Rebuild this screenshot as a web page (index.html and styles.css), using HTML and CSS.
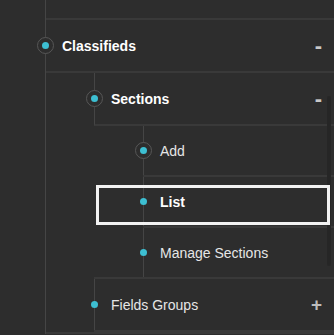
FILE: index.html
```html
<!DOCTYPE html>
<html lang="en">
<head>
  <meta charset="UTF-8" />
  <meta name="viewport" content="width=device-width, initial-scale=1" />
  <title>Menu tree</title>
  <link rel="stylesheet" href="styles.css">
</head>
<body>

<!-- Sidebar tree -->
<div class="tree">
  <ul class="branch root">
    <li class="node"><div class="stub"></div></li>
    <li class="node">
      <div class="row open">
        <span class="marker ring"><span class="dot"></span></span>
        <span class="label strong">Classifieds</span>
        <span class="toggle">-</span>
      </div>
      <ul class="branch sub">
        <li class="node">
          <div class="row open">
            <span class="marker ring"><span class="dot"></span></span>
            <span class="label strong">Sections</span>
            <span class="toggle">-</span>
          </div>
          <ul class="branch sub deep">
            <li class="node">
              <div class="row short">
                <span class="marker ring"><span class="dot"></span></span>
                <span class="label">Add</span>
              </div>
            </li>
            <li class="node">
              <div class="row short current">
                <span class="marker"><span class="dot"></span></span>
                <span class="label strong">List</span>
              </div>
            </li>
            <li class="node last">
              <div class="row short">
                <span class="marker"><span class="dot"></span></span>
                <span class="label">Manage Sections</span>
              </div>
            </li>
          </ul>
        </li>
        <li class="node">
          <div class="row">
            <span class="marker"><span class="dot"></span></span>
            <span class="label">Fields Groups</span>
            <span class="toggle plus">+</span>
          </div>
        </li>
      </ul>
    </li>
  </ul>
  <div class="scroll-thumb"></div>
</div>

</body>
</html>
```

FILE: styles.css
```css
    body {
      font-family: 'Liberation Sans', Arial, sans-serif;
      font-size: 14px;
      background-color: #2d2d2d;
      color: #e6e6e6;
      margin: 0;
      padding: 0;
      overflow: hidden;
    }

    .tree {
      position: relative;
    }

    .branch {
      list-style: none;
      margin: 0;
      padding: 0;
    }

    /* Tree lines */
    .root {
      margin-left: 45px;
      border-left: 1px solid #454545;
    }

    .sub {
      padding-left: 48px;
    }

    .sub.deep {
      padding-left: 49px;
    }

    .node {
      border-bottom: 2px solid #393939;
    }

    .node.last {
      border-bottom: none;
    }

    .stub {
      height: 18px;
    }

    .row {
      display: flex;
      align-items: center;
      height: 51px;
      padding-right: 12px;
    }

    .row.short {
      height: 49px;
    }

    .row.open {
      border-bottom: 2px solid #393939;
    }

    .sub .row {
      border-left: 1px solid #454545;
    }

    /* Bullets */
    .marker {
      box-sizing: border-box;
      width: 17px;
      height: 17px;
      margin-left: -9px;
      border: 1px solid transparent;
      border-radius: 50%;
      display: flex;
      align-items: center;
      justify-content: center;
      flex-shrink: 0;
    }

    .marker.ring {
      border-color: #575757;
      background-color: #2d2d2d;
    }

    .dot {
      width: 7px;
      height: 7px;
      border-radius: 50%;
      background-color: #3dbfd2;
    }

    .label {
      margin-left: 8px;
    }

    .label.strong {
      font-weight: bold;
      color: #fff;
    }

    .toggle {
      margin-left: auto;
      font-weight: bold;
      font-size: 22px;
      color: #c8c8c8;
    }

    .toggle.plus {
      font-size: 19px;
      color: #bdbdbd;
    }

    /* Selected item frame */
    .row.current {
      position: relative;
    }

    .row.current::before {
      content: "";
      position: absolute;
      z-index: 2;
      left: -48px;
      top: 8px;
      width: 234px;
      height: 40px;
      box-sizing: border-box;
      border: 3px solid #f2f2f2;
    }

    .scroll-thumb {
      position: absolute;
      z-index: 1;
      right: 3px;
      top: 96px;
      width: 4px;
      height: 170px;
      border-radius: 2px;
      background-color: #262626;
    }
```
